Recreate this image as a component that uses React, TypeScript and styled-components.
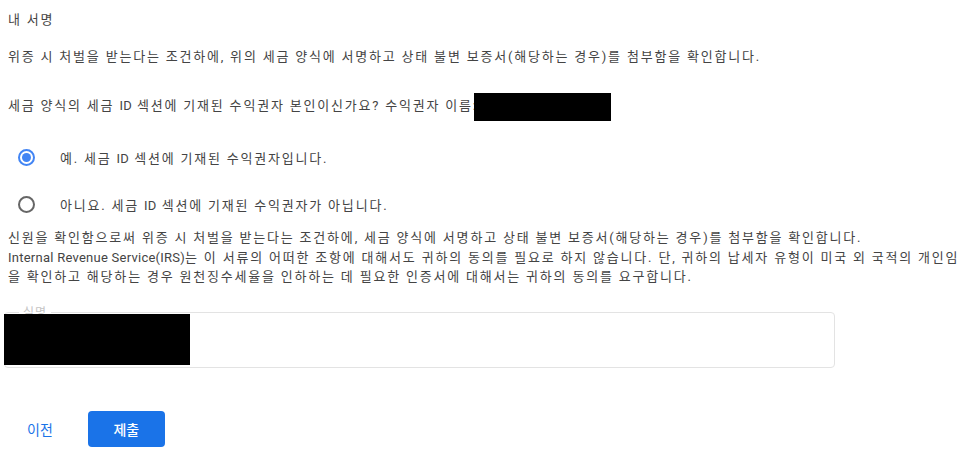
import React from "react";
import styled, { createGlobalStyle } from "styled-components";

const Global = createGlobalStyle`
  html, body { margin: 0; padding: 0; background: #fff; }
  body {
    font-family: Roboto, "Noto Sans CJK KR", "Noto Sans", sans-serif;
    font-size: 13px;
    color: #444;
  }
  * { box-sizing: border-box; }
`;

/* Korean text in the reference is set wider than the Latin text */
const KoText = styled.span`
  letter-spacing: 1.8px;
`;

const Latin = styled.span`
  letter-spacing: 0.25px;
`;

function ko(text: string) {
  const parts = text.split(/([A-Za-z][A-Za-z ()]*[A-Za-z)])/);
  return (
    <KoText>
      {parts.map((part, i) => (i % 2 === 1 ? <Latin key={i}>{part}</Latin> : part))}
    </KoText>
  );
}

const Page = styled.div`
  width: 970px;
  height: 460px;
  padding: 10px 4px 0 4px;
  display: flex;
  flex-direction: column;
`;

const Text = styled.div<{ $mt?: number }>`
  padding-left: 4px;
  line-height: 20px;
  margin-top: ${(p) => p.$mt ?? 0}px;
  white-space: nowrap;
`;

const Redact = styled.span`
  display: inline-block;
  width: 137px;
  height: 28px;
  background: #000;
  vertical-align: middle;
  margin-left: -4px;
`;

const RadioGroup = styled.div`
  display: flex;
  flex-direction: column;
  gap: 27px;
  margin-top: 26px;
`;

const RadioRow = styled.label`
  display: flex;
  align-items: center;
  height: 20px;
  padding-left: 14px;
`;

const RadioCircle = styled.span<{ $checked?: boolean }>`
  width: 17px;
  height: 17px;
  border-radius: 50%;
  border: 2px solid ${(p) => (p.$checked ? "#4285f4" : "#666")};
  display: flex;
  align-items: center;
  justify-content: center;
  margin-right: 25px;
  flex: none;
  &::after {
    content: "";
    width: 9px;
    height: 9px;
    border-radius: 50%;
    background: #4285f4;
    display: ${(p) => (p.$checked ? "block" : "none")};
  }
`;

const Para = styled.div`
  padding-left: 4px;
  margin-top: 14px;
  line-height: 19.5px;
  width: 956px;
`;

const Field = styled.fieldset`
  position: relative;
  width: 831px;
  height: 61px;
  margin: 20px 0 0 0;
  padding: 0;
  border: 1px solid #e3e3e3;
  border-radius: 4px;
`;

const Legend = styled.legend`
  margin-left: 14px;
  padding: 0 4px;
  font-size: 12px;
  line-height: 12px;
  color: #c4c4c4;
  letter-spacing: 1px;
`;

const FieldRedact = styled.div`
  position: absolute;
  left: -1px;
  top: -5px;
  width: 186px;
  height: 51px;
  background: #000;
`;

const Actions = styled.div`
  display: flex;
  align-items: center;
  gap: 19px;
  margin-top: 43px;
  padding-left: 7px;
`;

const TextButton = styled.button`
  border: none;
  background: none;
  color: #1a73e8;
  font: inherit;
  font-size: 14px;
  padding: 0 16px;
  height: 36px;
`;

const PrimaryButton = styled.button`
  border: none;
  background: #1a73e8;
  color: #fff;
  font: inherit;
  font-size: 14px;
  font-weight: 500;
  width: 77px;
  height: 36px;
  border-radius: 4px;
`;

export default function App() {
  return (
    <>
      <Global />
      <Page>
        <Text>{ko("내 서명")}</Text>
        <Text $mt={17}>
          {ko(
            "위증 시 처벌을 받는다는 조건하에, 위의 세금 양식에 서명하고 상태 불변 보증서(해당하는 경우)를 첨부함을 확인합니다."
          )}
        </Text>
        <Text $mt={26}>
          {ko("세금 양식의 세금 ID 섹션에 기재된 수익권자 본인이신가요? 수익권자 이름:")}
          <Redact />
        </Text>
        <RadioGroup>
          <RadioRow>
            <RadioCircle $checked />
            {ko("예. 세금 ID 섹션에 기재된 수익권자입니다.")}
          </RadioRow>
          <RadioRow>
            <RadioCircle />
            {ko("아니요. 세금 ID 섹션에 기재된 수익권자가 아닙니다.")}
          </RadioRow>
        </RadioGroup>
        <Para>
          {ko(
            "신원을 확인함으로써 위증 시 처벌을 받는다는 조건하에, 세금 양식에 서명하고 상태 불변 보증서(해당하는 경우)를 첨부함을 확인합니다."
          )}
          <br />
          {ko(
            "Internal Revenue Service(IRS)는 이 서류의 어떠한 조항에 대해서도 귀하의 동의를 필요로 하지 않습니다. 단, 귀하의 납세자 유형이 미국 외 국적의 개인임을 확인하고 해당하는 경우 원천징수세율을 인하하는 데 필요한 인증서에 대해서는 귀하의 동의를 요구합니다."
          )}
        </Para>
        <Field>
          <Legend>실명</Legend>
          <FieldRedact />
        </Field>
        <Actions>
          <TextButton>이전</TextButton>
          <PrimaryButton>제출</PrimaryButton>
        </Actions>
      </Page>
    </>
  );
}
